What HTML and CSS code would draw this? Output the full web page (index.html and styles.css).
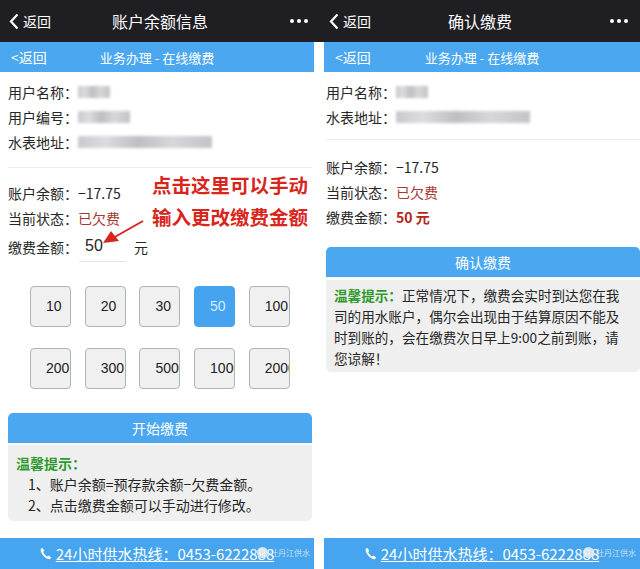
FILE: index.html
```html
<!DOCTYPE html>
<html>

<head>
    <meta charset="utf-8" />
    <meta name="viewport" content="width=device-width, initial-scale=1" />
    <title>在线缴费</title>
    <link rel="stylesheet" href="styles.css">
</head>

<body>
    <div class="page">
        <!-- 左边: 账户余额信息 -->
        <section class="phone">
            <header class="navbar">
                <span class="nav-back">
                    <svg width="10" height="17" viewBox="0 0 10 17"><path d="M8.5 1.5 L2 8.5 L8.5 15.5" fill="none" stroke="#fff" stroke-width="2.2" /></svg>返回
                </span>
                <span class="nav-title">账户余额信息</span>
                <span class="nav-more"><i></i><i></i><i></i></span>
            </header>
            <div class="screen screen-left">
                <div class="subbar">
                    <span class="sub-back">&lt;返回</span>
                    <span class="sub-title">业务办理 - 在线缴费</span>
                    <span></span>
                </div>
                <div class="content">
                    <div class="row"><span class="label">用户名称：</span><span class="blur w32"></span></div>
                    <div class="row"><span class="label">用户编号：</span><span class="blur w52"></span></div>
                    <div class="row"><span class="label">水表地址：</span><span class="blur w134"></span></div>
                    <div class="divider"></div>
                    <div class="row"><span class="label">账户余额：</span><span>−17.75</span></div>
                    <div class="row"><span class="label">当前状态：</span><span class="owed">已欠费</span></div>
                    <div class="row row-input"><span class="label">缴费金额：</span><span class="amount-input">50</span><span class="unit">元</span></div>

                    <div class="note">点击这里可以手动<br>输入更改缴费金额</div>
                    <svg class="arrow" width="44" height="26" viewBox="0 0 44 26">
                        <line x1="42" y1="2" x2="12" y2="19" stroke="#d9261c" stroke-width="2" />
                        <polygon points="2,24 10,12 18,22" fill="#d9261c" />
                    </svg>

                    <div class="amounts">
                        <span class="amt">10</span>
                        <span class="amt">20</span>
                        <span class="amt">30</span>
                        <span class="amt amt-on">50</span>
                        <span class="amt">100</span>
                        <span class="amt">200</span>
                        <span class="amt">300</span>
                        <span class="amt">500</span>
                        <span class="amt">1000</span>
                        <span class="amt">2000</span>
                    </div>

                    <div class="btn">开始缴费</div>
                    <div class="tips tips-left">
                        <div class="tips-title">温馨提示：</div>
                        <div class="tips-line">1、账户余额=预存款余额−欠费金额。</div>
                        <div class="tips-line">2、点击缴费金额可以手动进行修改。</div>
                    </div>
                </div>
                <footer class="hotline">
                    <svg width="12" height="13" viewBox="0 0 12 13"><path d="M2.2 0.8 L4.3 3.6 L3.2 5 C4 7 5.2 8.4 7.2 9.6 L8.5 8.4 L11.3 10.6 L9.8 12.3 C5 11.5 1.2 7.4 0.5 2.4 Z" fill="#fff" /></svg>
                    <span class="hotline-text">24小时供水热线：0453-6222888</span>
                    <span class="mark"><i></i>牡丹江供水</span>
                </footer>
            </div>
        </section>

        <!-- 右边: 确认缴费 -->
        <section class="phone">
            <header class="navbar">
                <span class="nav-back">
                    <svg width="10" height="17" viewBox="0 0 10 17"><path d="M8.5 1.5 L2 8.5 L8.5 15.5" fill="none" stroke="#fff" stroke-width="2.2" /></svg>返回
                </span>
                <span class="nav-title">确认缴费</span>
                <span class="nav-more"><i></i><i></i><i></i></span>
            </header>
            <div class="screen screen-right">
                <div class="subbar">
                    <span class="sub-back">&lt;返回</span>
                    <span class="sub-title">业务办理 - 在线缴费</span>
                    <span></span>
                </div>
                <div class="content content-right">
                    <div class="row"><span class="label">用户名称：</span><span class="blur w32"></span></div>
                    <div class="row"><span class="label">水表地址：</span><span class="blur w134"></span></div>
                    <div class="divider divider-right"></div>
                    <div class="row"><span class="label">账户余额：</span><span>−17.75</span></div>
                    <div class="row"><span class="label">当前状态：</span><span class="owed">已欠费</span></div>
                    <div class="row"><span class="label">缴费金额：</span><span class="pay">50 元</span></div>

                    <div class="btn btn-confirm">确认缴费</div>
                    <div class="tips tips-right">
                        <span class="tips-title">温馨提示：</span>正常情况下，缴费会实时到达您在我<br>司的用水账户，偶尔会出现由于结算原因不能及<br>时到账的，会在缴费次日早上9:00之前到账，请<br>您谅解！
                    </div>
                </div>
                <footer class="hotline">
                    <svg width="12" height="13" viewBox="0 0 12 13"><path d="M2.2 0.8 L4.3 3.6 L3.2 5 C4 7 5.2 8.4 7.2 9.6 L8.5 8.4 L11.3 10.6 L9.8 12.3 C5 11.5 1.2 7.4 0.5 2.4 Z" fill="#fff" /></svg>
                    <span class="hotline-text">24小时供水热线：0453-6222888</span>
                    <span class="mark"><i></i>牡丹江供水</span>
                </footer>
            </div>
        </section>
    </div>
</body>

</html>
```

FILE: styles.css
```css
body {
    margin: 0;
    background: #fff;
    font-family: "Noto Sans CJK SC", "Liberation Sans", sans-serif;
    color: #262626;
}

.page {
    display: flex;
    width: 640px;
    height: 569px;
    overflow: hidden;
}

.phone {
    width: 320px;
    display: flex;
    flex-direction: column;
}

/* 顶部导航 */
.navbar {
    height: 42px;
    background: #1f1e23;
    color: #fff;
    display: grid;
    grid-template-columns: 1fr auto 1fr;
    align-items: center;
}

.nav-back {
    display: flex;
    align-items: center;
    gap: 4px;
    padding-left: 9px;
    font-size: 14px;
}

.nav-title {
    font-size: 16px;
}

.nav-more {
    justify-self: end;
    display: flex;
    gap: 3px;
    padding-right: 12px;
}

.nav-more i {
    width: 4px;
    height: 4px;
    border-radius: 50%;
    background: #fff;
}

.screen {
    flex: 1;
    display: flex;
    flex-direction: column;
}

.screen-left {
    margin-right: 6px;
}

.screen-right {
    margin-left: 4px;
}

.subbar {
    height: 30px;
    background: #4aa7f0;
    color: #fff;
    display: grid;
    grid-template-columns: 1fr auto 1fr;
    align-items: center;
    font-size: 13px;
}

.sub-back {
    padding-left: 11px;
    font-size: 14px;
}

.content {
    position: relative;
    padding: 7px 2px 0 8px;
    font-size: 14px;
}

.content-right {
    padding-left: 2px;
    padding-right: 0;
}

.row {
    height: 25px;
    display: flex;
    align-items: center;
}

.label {
    flex-shrink: 0;
    min-width: 69px;
    white-space: nowrap;
}

.blur {
    height: 12px;
    background: linear-gradient(90deg, #c9c9cd 0%, #dcdce0 20%, #bdbdc2 45%, #d7d7da 70%, #c3c3c7 100%);
    filter: blur(1.5px);
}

.w32 { width: 32px; }
.w52 { width: 52px; }
.w134 { width: 134px; }

.divider {
    height: 1px;
    background: #ededed;
    margin: 13px 0 12px;
}

.divider-right {
    margin: 10px 0 14px;
}

.owed {
    color: #a83a34;
}

.pay {
    color: #b3261e;
    font-weight: bold;
}

.row-input {
    height: 33px;
}

.amount-input {
    width: 41px;
    height: 30px;
    line-height: 30px;
    padding-left: 6px;
    margin-left: 1px;
    border-bottom: 1px solid #e4e4e4;
    font-family: "Liberation Sans", sans-serif;
    font-size: 16px;
}

.unit {
    margin-left: 8px;
}

/* 红色标注 */
.note {
    position: absolute;
    left: 152px;
    top: 97px;
    color: #d9261c;
    font-size: 19.5px;
    font-weight: bold;
    line-height: 32px;
    white-space: nowrap;
}

.arrow {
    position: absolute;
    left: 101px;
    top: 147px;
}

.amounts {
    display: grid;
    grid-template-columns: repeat(5, 41px);
    column-gap: 13.7px;
    row-gap: 21px;
    padding-left: 22px;
    margin-top: 23px;
}

.amt {
    height: 39px;
    border: 1px solid #a9b7b7;
    border-radius: 4px;
    background: #f0f0f0;
    overflow: hidden;
    white-space: nowrap;
    padding-left: 15px;
    line-height: 39px;
    font-family: "Liberation Sans", sans-serif;
    font-size: 14px;
    color: #222;
}

.amt-on {
    background: #45a3f0;
    border-color: #45a3f0;
    color: #d5ebff;
}

.btn {
    margin-top: 24px;
    height: 30px;
    line-height: 30px;
    border-radius: 5px 5px 0 0;
    background: #4aa7f0;
    color: #fff;
    text-align: center;
    font-size: 14px;
}

.btn-confirm {
    margin-top: 18px;
}

.tips {
    margin-top: 2px;
    background: #efefef;
    border-radius: 0 0 5px 5px;
    line-height: 21px;
}

.tips-left {
    height: 76px;
    box-sizing: border-box;
    padding: 8px 8px 0;
}

.tips-title {
    color: #2f9a2c;
    font-weight: bold;
}

.tips-line {
    padding-left: 12px;
}

.tips-right {
    margin-top: 3px;
    padding: 5px 8px 3px;
    font-size: 13.6px;
    white-space: nowrap;
}

/* 底部热线 */
.hotline {
    position: relative;
    margin-top: auto;
    height: 31px;
    background: #46a5ee;
    color: #fff;
    display: flex;
    align-items: center;
    justify-content: center;
    gap: 4px;
    font-size: 15px;
}

.hotline-text {
    text-decoration: underline;
}

.mark {
    position: absolute;
    right: 4px;
    top: 9px;
    display: flex;
    align-items: center;
    gap: 2px;
    font-size: 8px;
    color: rgba(225, 235, 245, 0.85);
}

.mark i {
    width: 11px;
    height: 11px;
    border-radius: 50%;
    background: rgba(230, 236, 242, 0.9);
}
```
